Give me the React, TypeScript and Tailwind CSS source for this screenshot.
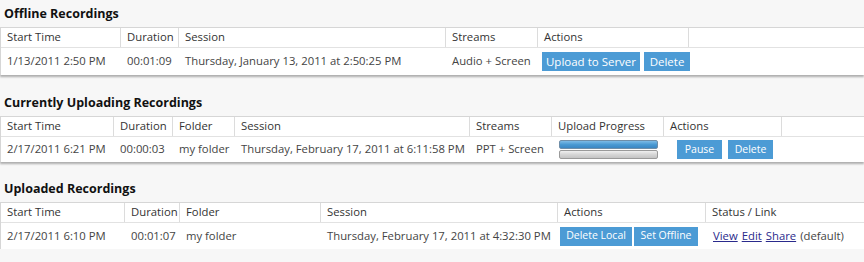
import React from "react";

const font = { fontFamily: '"Open Sans", "Noto Sans", Arial, sans-serif' };

type Col = { label: string; w: number | null };

function HeaderRow({ cols }: { cols: Col[] }) {
  return (
    <div className="flex h-[20px] border-b border-[#e2e2e2]">
      {cols.map((c, i) => (
        <div
          key={i}
          className={`flex items-center pl-[6px] text-[11.3px] text-[#333] whitespace-nowrap overflow-hidden ${c.w === null ? "flex-1" : "shrink-0 border-r border-[#dcdcdc]"}`}
          style={c.w === null ? undefined : { width: c.w }}
        >
          {c.label}
        </div>
      ))}
    </div>
  );
}

function Cell({ w, children, pl = 6 }: { w: number | null; children?: React.ReactNode; pl?: number }) {
  return (
    <div
      className={`flex items-center text-[11.3px] text-[#444] whitespace-nowrap ${w === null ? "flex-1" : "shrink-0"}`}
      style={{ ...(w === null ? {} : { width: w }), paddingLeft: pl }}
    >
      {children}
    </div>
  );
}

function Btn({ children, w, small }: { children: React.ReactNode; w: number; small?: boolean }) {
  return (
    <span
      className={`inline-flex items-center justify-center h-[19px] bg-[#4c9bd5] text-white ${small ? "text-[10.5px]" : "text-[11.5px]"}`}
      style={{ width: w }}
    >
      {children}
    </span>
  );
}

function Title({ children }: { children: React.ReactNode }) {
  return <div className="h-[27px] pl-[4px] pt-[6px] text-[12.5px] font-bold text-[#111] leading-[16px]">{children}</div>;
}

function Table({ children, shadow = true }: { children: React.ReactNode; shadow?: boolean }) {
  return (
    <div
      className={`bg-white border-t border-l border-[#d6d6d6] ${shadow ? "shadow-[0_2px_2px_rgba(0,0,0,0.3)]" : ""}`}
    >
      {children}
    </div>
  );
}

export default function App() {
  return (
    <div className="w-[864px] h-[262px] overflow-hidden bg-[#f7f7f7]" style={font}>
      <Title>Offline Recordings</Title>
      <Table>
        <HeaderRow
          cols={[
            { label: "Start Time", w: 120 },
            { label: "Duration", w: 58 },
            { label: "Session", w: 267 },
            { label: "Streams", w: 92 },
            { label: "Actions", w: 151 },
            { label: "", w: null },
          ]}
        />
        <div className="flex h-[27px]">
          <Cell w={120}>1/13/2011 2:50 PM</Cell>
          <Cell w={58}>00:01:09</Cell>
          <Cell w={267}>Thursday, January 13, 2011 at 2:50:25 PM</Cell>
          <Cell w={92}>Audio + Screen</Cell>
          <Cell w={151} pl={4}>
            <div className="flex gap-[4px]">
              <Btn w={98}>Upload to Server</Btn>
              <Btn w={46}>Delete</Btn>
            </div>
          </Cell>
          <Cell w={null} />
        </div>
      </Table>
      <div className="h-[14px]" />
      <Title>Currently Uploading Recordings</Title>
      <Table>
        <HeaderRow
          cols={[
            { label: "Start Time", w: 113 },
            { label: "Duration", w: 59 },
            { label: "Folder", w: 62 },
            { label: "Session", w: 235 },
            { label: "Streams", w: 82 },
            { label: "Upload Progress", w: 112 },
            { label: "Actions", w: 118 },
            { label: "", w: null },
          ]}
        />
        <div className="flex h-[25px]">
          <Cell w={113}>2/17/2011 6:21 PM</Cell>
          <Cell w={59}>00:00:03</Cell>
          <Cell w={62}>my folder</Cell>
          <Cell w={235}>Thursday, February 17, 2011 at 6:11:58 PM</Cell>
          <Cell w={82}>PPT + Screen</Cell>
          <Cell w={112} pl={7}>
            <div className="flex flex-col w-[99px] gap-[1px]">
              <div className="h-[9px] rounded-[2px] border border-[#6f8ea8] bg-gradient-to-b from-[#7dbbe6] via-[#4a9ad3] to-[#3b86c2]" />
              <div className="h-[9px] rounded-[2px] border border-[#9a9a9a] bg-gradient-to-b from-[#f0f0f0] via-[#d6d6d6] to-[#c4c4c4]" />
            </div>
          </Cell>
          <Cell w={118} pl={13}>
            <div className="flex gap-[6px]">
              <Btn small w={45}>Pause</Btn>
              <Btn small w={45}>Delete</Btn>
            </div>
          </Cell>
          <Cell w={null} />
        </div>
      </Table>
      <div className="h-[13px]" />
      <Title>Uploaded Recordings</Title>
      <Table shadow={false}>
        <HeaderRow
          cols={[
            { label: "Start Time", w: 124 },
            { label: "Duration", w: 55 },
            { label: "Folder", w: 141 },
            { label: "Session", w: 237 },
            { label: "Actions", w: 148 },
            { label: "Status / Link", w: null },
          ]}
        />
        <div className="flex h-[26px]">
          <Cell w={124}>2/17/2011 6:10 PM</Cell>
          <Cell w={55}>00:01:07</Cell>
          <Cell w={141}>my folder</Cell>
          <Cell w={237}>Thursday, February 17, 2011 at 4:32:30 PM</Cell>
          <Cell w={148} pl={2}>
            <div className="flex gap-[2px]">
              <Btn small w={72}>Delete Local</Btn>
              <Btn small w={64}>Set Offline</Btn>
            </div>
          </Cell>
          <Cell w={null} pl={7}>
            <a className="underline text-[#2a2a8c] mr-[4px]" href="#">View</a>
            <a className="underline text-[#2a2a8c] mr-[4px]" href="#">Edit</a>
            <a className="underline text-[#2a2a8c] mr-[4px]" href="#">Share</a>
            <span>(default)</span>
          </Cell>
        </div>
      </Table>
    </div>
  );
}
